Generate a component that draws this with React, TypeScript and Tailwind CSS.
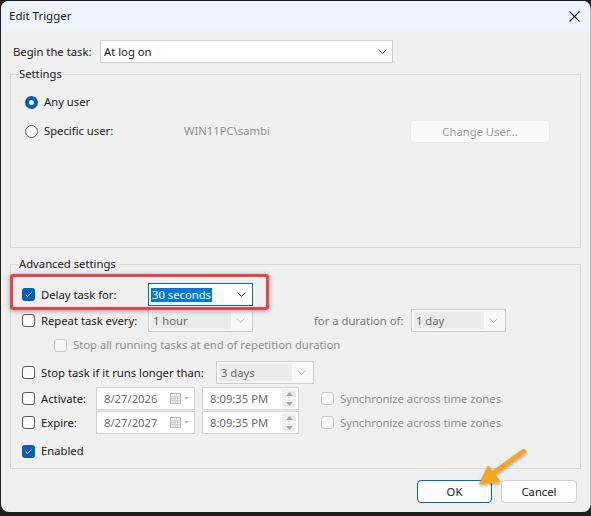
import type { ReactNode } from 'react';

function Check({ checked = false, disabled = false }: { checked?: boolean; disabled?: boolean }) {
  if (checked) {
    return (
      <span className="flex h-[13px] w-[13px] shrink-0 items-center justify-center rounded-[3px] bg-[#005fb8]">
        <svg width="9" height="9" viewBox="0 0 9 9" aria-hidden="true">
          <path d="M1.6 4.7 L3.5 6.5 L7.4 2.5" fill="none" stroke="#ffffff" strokeWidth="1" />
        </svg>
      </span>
    );
  }
  return (
    <span
      className={`h-[13px] w-[13px] shrink-0 rounded-[3px] border ${
        disabled ? 'border-[#cacaca] bg-[#f6f6f6]' : 'border-[#5c5c5c] bg-[#fbfbfb]'
      }`}
    />
  );
}

function Radio({ checked = false }: { checked?: boolean }) {
  if (checked) {
    return (
      <span className="flex h-[13px] w-[13px] shrink-0 items-center justify-center rounded-full bg-[#005fb8]">
        <span className="h-[5px] w-[5px] rounded-full bg-white" />
      </span>
    );
  }
  return <span className="h-[13px] w-[13px] shrink-0 rounded-full border border-[#5c5c5c] bg-[#fbfbfb]" />;
}

function Chevron({ color = '#3a3a3a' }: { color?: string }) {
  return (
    <svg width="9" height="5" viewBox="0 0 9 5" aria-hidden="true">
      <path d="M0.5 0.5 L4.5 4.5 L8.5 0.5" fill="none" stroke={color} strokeWidth="1" />
    </svg>
  );
}

function DisabledCombo({ value, className }: { value: string; className: string }) {
  return (
    <div className={`flex h-[23px] shrink-0 items-stretch border border-[#cdcdcd] bg-[#f8f8f8] p-[2px] ${className}`}>
      <div className="flex flex-1 items-center bg-[#ebebeb] pl-[2px] text-[#6b6b6b]">{value}</div>
      <div className="flex w-[19px] items-center justify-center">
        <Chevron color="#bdbdbd" />
      </div>
    </div>
  );
}

function CalendarIcon() {
  return (
    <svg width="20" height="11" viewBox="0 0 20 11" aria-hidden="true">
      <rect x="0.5" y="0.5" width="10" height="10" fill="#f4f4f4" stroke="#b9b9b9" />
      <path d="M0.5 3.5 H10.5 M0.5 5.5 H10.5 M0.5 7.5 H10.5 M3.5 3.5 V10.5 M5.5 3.5 V10.5 M7.5 3.5 V10.5" stroke="#cfcfcf" strokeWidth="1" />
      <path d="M14 4 L19 4 L16.5 6.8 Z" fill="#bdbdbd" />
    </svg>
  );
}

function DateBox({ value }: { value: string }) {
  return (
    <div className="flex h-[23px] w-[99px] shrink-0 items-center justify-between border border-[#d3d3d3] bg-white pr-[4px] pl-[7px] text-[#6b6b6b]">
      <span>{value}</span>
      <CalendarIcon />
    </div>
  );
}

function TimeBox({ value }: { value: string }) {
  return (
    <div className="flex h-[23px] w-[97px] shrink-0 items-center justify-between border border-[#d3d3d3] bg-white pr-[2px] pl-[7px] text-[#6b6b6b]">
      <span>{value}</span>
      <div className="flex flex-col gap-px">
        {[0, 1].map((i) => (
          <span key={i} className="flex h-[9px] w-[14px] items-center justify-center bg-[#efefef]">
            <svg width="7" height="4" viewBox="0 0 7 4" aria-hidden="true">
              <path d={i === 0 ? 'M0 4 L3.5 0 L7 4 Z' : 'M0 0 L3.5 4 L7 0 Z'} fill="#a8a8a8" />
            </svg>
          </span>
        ))}
      </div>
    </div>
  );
}

function Group({ title, className, children }: { title: string; className: string; children: ReactNode }) {
  return (
    <div className={`border border-[#d9d9d9] ${className}`}>
      <div className="-mt-[9px] ml-[7px] w-fit bg-[#f0f0f0] px-[1px] leading-[16px] text-[#1a1a1a]">{title}</div>
      {children}
    </div>
  );
}

export default function App() {
  return (
    <div className="h-[516px] w-[591px] bg-[#1e1e1e] pt-px pl-px font-['Noto_Sans',sans-serif] text-[11.25px] leading-[16px] text-[#1a1a1a]">
      <div className="relative h-[511px] w-[590px] overflow-hidden rounded-[8px] border-r border-[#b8b8b8] bg-[#f0f0f0]">
        {/* title bar */}
        <div className="flex h-[30px] items-center justify-between bg-[#eef3f9] pr-[10px] pl-[8px]">
          <span className="text-[11.5px]">Edit Trigger</span>
          <svg width="11" height="11" viewBox="0 0 11 11" aria-hidden="true">
            <path d="M0.5 0.5 L10.5 10.5 M10.5 0.5 L0.5 10.5" stroke="#1a1a1a" strokeWidth="1.1" />
          </svg>
        </div>

        <div className="px-[9px]">
          <div className="mt-[9px] flex h-[23px] items-center pl-[3px]">
            <span className="w-[87px] shrink-0">Begin the task:</span>
            <div className="flex h-[23px] w-[293px] items-center justify-between border border-[#cfcfcf] bg-white pr-[5px] pl-[3px]">
              <span>At log on</span>
              <Chevron color="#555555" />
            </div>
          </div>

          <Group title="Settings" className="mt-[11px] h-[174px]">
            <div className="mt-[9px] flex h-[22px] items-center gap-[6px] pl-[14px]">
              <Radio checked />
              <span>Any user</span>
            </div>
            <div className="mt-[6px] flex h-[24px] items-center pl-[14px]">
              <Radio />
              <span className="ml-[6px] w-[140px] shrink-0">Specific user:</span>
              <span className="w-[226px] shrink-0 text-[#8f8f8f]">WIN11PC\sambi</span>
              <div className="flex h-[23px] w-[140px] items-center justify-center self-end rounded-[4px] border border-[#ebebeb] bg-[#fafafa] text-[#9b9b9b]">
                Change User...
              </div>
            </div>
          </Group>

          <Group title="Advanced settings" className="mt-[16px] h-[205px]">
            <div className="mt-[11px] flex h-[23px] items-center pl-[11px]">
              <Check checked />
              <span className="ml-[6px] w-[107px] shrink-0">Delay task for:</span>
              <div className="flex h-[23px] w-[105px] items-center justify-between border border-[#0067c0] bg-white pr-[6px] pl-[2px]">
                <span className="bg-[#0078d7] px-px leading-[14px] text-white">30 seconds</span>
                <Chevron />
              </div>
            </div>

            <div className="mt-[3px] flex h-[23px] items-center pl-[11px]">
              <Check />
              <span className="ml-[6px] w-[107px] shrink-0">Repeat task every:</span>
              <DisabledCombo value="1 hour" className="w-[105px]" />
              <span className="ml-[61px] w-[97px] shrink-0 text-[#7a7a7a]">for a duration of:</span>
              <DisabledCombo value="1 day" className="w-[95px]" />
            </div>

            <div className="mt-[5px] flex h-[16px] items-center pl-[43px]">
              <Check disabled />
              <span className="ml-[6px] text-[#8f8f8f]">Stop all running tasks at end of repetition duration</span>
            </div>

            <div className="mt-[8px] flex h-[23px] items-center pl-[11px]">
              <Check />
              <span className="ml-[6px] w-[175px] shrink-0">Stop task if it runs longer than:</span>
              <DisabledCombo value="3 days" className="w-[98px]" />
            </div>

            {[
              ['Activate:', '8/27/2026'],
              ['Expire:', '8/27/2027'],
            ].map(([label, date], i) => (
              <div key={label} className={`${i === 0 ? 'mt-[3px]' : 'mt-[1px]'} flex h-[23px] items-center pl-[11px]`}>
                <Check />
                <span className="ml-[6px] w-[55px] shrink-0">{label}</span>
                <DateBox value={date} />
                <div className="ml-[7px]">
                  <TimeBox value="8:09:35 PM" />
                </div>
                <div className="ml-[22px] flex items-center gap-[6px]">
                  <Check disabled />
                  <span className="text-[#8f8f8f]">Synchronize across time zones</span>
                </div>
              </div>
            ))}

            <div className="mt-[9px] flex h-[16px] items-center gap-[6px] pl-[11px]">
              <Check checked />
              <span>Enabled</span>
            </div>
          </Group>

          <div className="mt-[11px] flex justify-end gap-[9px] pr-[4px]">
            <div className="flex h-[23px] w-[75px] items-center justify-center rounded-[4px] border border-[#0067c0] bg-[#fdfdfd]">
              OK
            </div>
            <div className="flex h-[23px] w-[76px] items-center justify-center rounded-[4px] border border-[#d0d0d0] bg-[#fdfdfd]">
              Cancel
            </div>
          </div>
        </div>

        {/* annotation: red highlight */}
        <div className="pointer-events-none absolute top-[273px] left-[9px] h-[36px] w-[259px] rounded-[3px] border-[3px] border-[#e8434b] shadow-[0_1px_5px_rgba(0,0,0,0.35)]" />

        {/* annotation: orange arrow */}
        <svg
          className="pointer-events-none absolute top-[440px] left-[465px]"
          width="70"
          height="55"
          viewBox="465 440 70 55"
          aria-hidden="true"
        >
          <defs>
            <filter id="sh" x="-20%" y="-20%" width="140%" height="140%">
              <feDropShadow dx="0" dy="1.5" stdDeviation="1.5" floodColor="#000" floodOpacity="0.35" />
            </filter>
          </defs>
          <g filter="url(#sh)">
            <path d="M522.5 450.5 L492 472.5" stroke="#f4a521" strokeWidth="5" strokeLinecap="round" />
            <path d="M479 482.5 L487.3 465.5 L498.5 480.5 Z" fill="#f4a521" stroke="#f4a521" strokeWidth="1.5" strokeLinejoin="round" />
          </g>
        </svg>
      </div>
    </div>
  );
}
